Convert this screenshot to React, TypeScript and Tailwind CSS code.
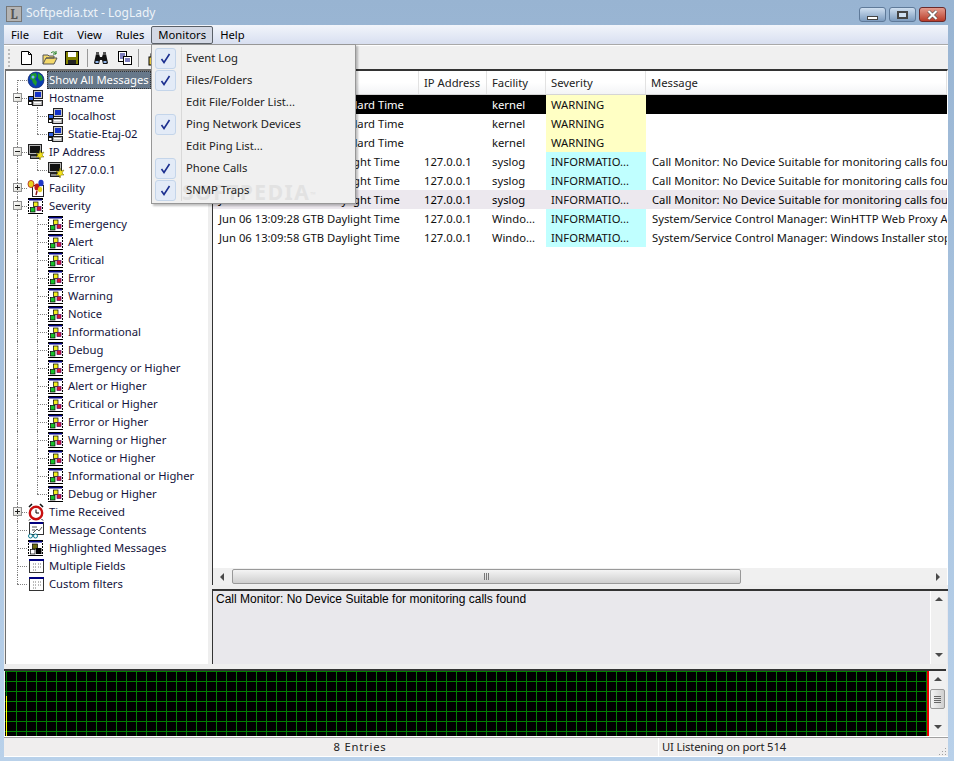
import type { ReactNode } from "react";

type IconKind = "globe" | "host" | "ip" | "facility" | "severity" | "clock" | "contents" | "highlight" | "fields";

type TreeItem = {
  label: string;
  icon: IconKind;
  level: 0 | 1;
  box?: "plus" | "minus";
  selected?: boolean;
  lastChild?: boolean;
  lastRoot?: boolean;
};

const severityNames = [
  "Emergency",
  "Alert",
  "Critical",
  "Error",
  "Warning",
  "Notice",
  "Informational",
  "Debug",
  "Emergency or Higher",
  "Alert or Higher",
  "Critical or Higher",
  "Error or Higher",
  "Warning or Higher",
  "Notice or Higher",
  "Informational or Higher",
  "Debug or Higher",
];

const treeItems: TreeItem[] = [
  { label: "Show All Messages", icon: "globe", level: 0, selected: true },
  { label: "Hostname", icon: "host", level: 0, box: "minus" },
  { label: "localhost", icon: "host", level: 1 },
  { label: "Statie-Etaj-02", icon: "host", level: 1, lastChild: true },
  { label: "IP Address", icon: "ip", level: 0, box: "minus" },
  { label: "127.0.0.1", icon: "ip", level: 1, lastChild: true },
  { label: "Facility", icon: "facility", level: 0, box: "plus" },
  { label: "Severity", icon: "severity", level: 0, box: "minus" },
  ...severityNames.map((label, i) => ({
    label,
    icon: "severity" as IconKind,
    level: 1 as const,
    lastChild: i === severityNames.length - 1,
  })),
  { label: "Time Received", icon: "clock", level: 0, box: "plus" },
  { label: "Message Contents", icon: "contents", level: 0 },
  { label: "Highlighted Messages", icon: "highlight", level: 0 },
  { label: "Multiple Fields", icon: "fields", level: 0 },
  { label: "Custom filters", icon: "fields", level: 0, lastRoot: true },
];

const logRows = [
  { time: "Jun 06 13:08:11 GTB Standard Time", ip: "", facility: "kernel", severity: "WARNING", message: "", selected: true },
  { time: "Jun 06 13:08:11 GTB Standard Time", ip: "", facility: "kernel", severity: "WARNING", message: "" },
  { time: "Jun 06 13:08:11 GTB Standard Time", ip: "", facility: "kernel", severity: "WARNING", message: "" },
  { time: "Jun 06 13:08:40 GTB Daylight Time", ip: "127.0.0.1", facility: "syslog", severity: "INFORMATIO...", message: "Call Monitor: No Device Suitable for monitoring calls found" },
  { time: "Jun 06 13:08:55 GTB Daylight Time", ip: "127.0.0.1", facility: "syslog", severity: "INFORMATIO...", message: "Call Monitor: No Device Suitable for monitoring calls found" },
  { time: "Jun 06 13:09:01 GTB Daylight Time", ip: "127.0.0.1", facility: "syslog", severity: "INFORMATIO...", message: "Call Monitor: No Device Suitable for monitoring calls found", hover: true },
  { time: "Jun 06 13:09:28 GTB Daylight Time", ip: "127.0.0.1", facility: "Windo...", severity: "INFORMATIO...", message: "System/Service Control Manager: WinHTTP Web Proxy Auto-Discovery" },
  { time: "Jun 06 13:09:58 GTB Daylight Time", ip: "127.0.0.1", facility: "Windo...", severity: "INFORMATIO...", message: "System/Service Control Manager: Windows Installer stopped" },
];

const menuItems = [
  { label: "Event Log", checked: true },
  { label: "Files/Folders", checked: true },
  { label: "Edit File/Folder List...", checked: false },
  { label: "Ping Network Devices", checked: true },
  { label: "Edit Ping List...", checked: false },
  { label: "Phone Calls", checked: true },
  { label: "SNMP Traps", checked: true },
];

function TreeIcon({ kind }: { kind: IconKind }) {
  const common = { width: 18, height: 18, viewBox: "0 0 18 18", className: "shrink-0" };
  switch (kind) {
    case "globe":
      return (
        <svg {...common}>
          <circle cx="9" cy="9" r="8" fill="#0a3fb0" stroke="#04145c" strokeWidth="0.6" />
          <path d="M4 3l5-1 1 3-2 3 2 3-1 4-3-3-1-3-2-1zM11 2l4 3 1 4-3 1-2-3z" fill="#1d9b2e" />
          <circle cx="6" cy="6" r="1.5" fill="#7fb4ff" />
        </svg>
      );
    case "host":
      return (
        <svg {...common}>
          <rect x="6.5" y="1.5" width="9" height="8" fill="#c8c8c8" stroke="#222" />
          <rect x="8" y="3" width="6" height="5" fill="#1533c8" />
          <rect x="5.5" y="11.5" width="10" height="5" fill="#a8a8a8" stroke="#222" />
          <path d="M7 13.5h7M7 15h7" stroke="#fff" />
          <rect x="1.5" y="7.5" width="5" height="4" fill="#2f5fe0" stroke="#111" />
          <rect x="1.5" y="12.5" width="3.5" height="3" fill="#fff" stroke="#111" />
        </svg>
      );
    case "ip":
      return (
        <svg {...common}>
          <rect x="1.5" y="1.5" width="13" height="10" fill="#b8b8b8" stroke="#222" />
          <rect x="3" y="3" width="10" height="7" fill="#111" />
          <rect x="3.5" y="12.5" width="9" height="3" fill="#888" stroke="#222" />
          <path d="M13 7l1 3 3-1-2 3 2 2-3 0-1 3-1-3-3 0 2-2-2-2 3 1z" fill="#f4e21d" stroke="#6c6200" strokeWidth="0.5" />
        </svg>
      );
    case "facility":
      return (
        <svg {...common}>
          <rect x="5.5" y="6.5" width="11" height="11" fill="#fff" stroke="#222" />
          <ellipse cx="4" cy="5" rx="3" ry="3.6" fill="#e8d21c" stroke="#b01818" strokeWidth="0.8" />
          <ellipse cx="10" cy="8" rx="2.6" ry="3.6" fill="#c01818" />
          <ellipse cx="14" cy="4" rx="2.6" ry="3.2" fill="#2038c8" />
          <ellipse cx="13" cy="10.5" rx="2.2" ry="2.8" fill="#e8d21c" />
          <path d="M10 12l-1 4" stroke="#8a1010" strokeWidth="1.4" />
        </svg>
      );
    case "severity":
      return (
        <svg {...common}>
          <rect x="1.5" y="1.5" width="14" height="15" fill="#fff" />
          <path d="M1.5 1v16M15.5 1v16" stroke="#000" strokeDasharray="2 1" />
          <path d="M1 1.5h15M1 16.5h15" stroke="#000" />
          <rect x="2" y="2" width="13" height="1.5" fill="#000080" />
          <rect x="6.5" y="5" width="4.5" height="4.5" fill="#f2ee1a" stroke="#000" strokeWidth="0.7" />
          <rect x="3.5" y="10.5" width="4.5" height="4.5" fill="#16c22a" stroke="#000" strokeWidth="0.7" />
          <rect x="10" y="9.5" width="4" height="4" fill="#d81830" stroke="#5a0a6a" strokeWidth="0.7" />
        </svg>
      );
    case "clock":
      return (
        <svg {...common}>
          <circle cx="9" cy="10" r="6.2" fill="#fff" stroke="#c81010" strokeWidth="2.4" />
          <path d="M9 6.5V10h3" fill="none" stroke="#000" />
          <path d="M2 4l3-3M16 4l-3-3" stroke="#111" strokeWidth="1.6" />
          <path d="M3.5 16l-1.5 1.5M14.5 16l1.5 1.5" stroke="#111" />
        </svg>
      );
    case "contents":
      return (
        <svg {...common}>
          <rect x="2.5" y="1.5" width="14" height="12" fill="#fff" stroke="#333" />
          <rect x="3" y="1" width="13" height="2" fill="#000080" />
          <path d="M5 6h5M5 9h3M6 12l4-4 2 2 3-4" fill="none" stroke="#555" />
          <circle cx="3.5" cy="15" r="2" fill="#fff" stroke="#0a7a90" />
          <circle cx="8.5" cy="15" r="2" fill="#fff" stroke="#0a7a90" />
        </svg>
      );
    case "highlight":
      return (
        <svg {...common}>
          <rect x="1.5" y="1.5" width="14" height="15" fill="#fff" />
          <path d="M1.5 1v16M15.5 1v16" stroke="#000" strokeDasharray="2 1" />
          <path d="M1 1.5h15M1 16.5h15" stroke="#000" />
          <rect x="2" y="2" width="13" height="1.5" fill="#000080" />
          <rect x="5.5" y="5" width="5" height="5" fill="#6d6d10" stroke="#000" strokeWidth="0.7" />
          <rect x="3.5" y="10.5" width="4.5" height="4.5" fill="#fff" stroke="#000" strokeWidth="0.7" />
          <rect x="9" y="9" width="5.5" height="6" fill="#000" />
        </svg>
      );
    case "fields":
      return (
        <svg {...common}>
          <rect x="2.5" y="2.5" width="14" height="13" fill="#fff" stroke="#333" />
          <rect x="2" y="2" width="15" height="2" fill="#000080" />
          <path d="M6 7h3M11 7h3M6 10h3M11 10h3M6 13h3" stroke="#777" strokeDasharray="1 1" />
        </svg>
      );
  }
}

function TreeBox({ type }: { type: "plus" | "minus" }) {
  return (
    <span className="absolute left-[5px] top-[4px] flex h-[9px] w-[9px] items-center justify-center border border-[#919191] bg-gradient-to-br from-white to-[#dcdcd4]">
      <span className="absolute h-px w-[5px] bg-[#222]" />
      {type === "plus" && <span className="absolute h-[5px] w-px bg-[#222]" />}
    </span>
  );
}

function TreeRow({ item, first }: { item: TreeItem; first: boolean }) {
  return (
    <div className="flex h-[18px] items-center">
      <div className="relative h-[18px] w-[19px] shrink-0">
        <span
          className={`absolute left-[9px] w-0 border-l border-dotted border-[#808080] ${
            first ? "top-[9px] bottom-0" : item.lastRoot ? "top-0 h-[9px]" : "inset-y-0"
          }`}
        />
        {item.level === 0 && <span className="absolute left-[9px] top-[9px] h-0 w-[10px] border-t border-dotted border-[#808080]" />}
        {item.box && <TreeBox type={item.box} />}
      </div>
      {item.level === 1 && (
        <div className="relative h-[18px] w-[20px] shrink-0">
          <span className={`absolute left-[10px] w-0 border-l border-dotted border-[#808080] ${item.lastChild ? "top-0 h-[9px]" : "inset-y-0"}`} />
          <span className="absolute left-[10px] top-[9px] h-0 w-[10px] border-t border-dotted border-[#808080]" />
        </div>
      )}
      <TreeIcon kind={item.icon} />
      <span
        className={`whitespace-nowrap px-[1px] leading-[16px] ${item.level === 1 ? "ml-[1px]" : "ml-[2px]"} ${
          item.selected ? "border border-dotted border-[#333] bg-[#67788a] text-white" : "border border-transparent text-[#14143c]"
        }`}
      >
        {item.label}
      </span>
    </div>
  );
}

function CaptionButton({ className, children }: { className: string; children: ReactNode }) {
  return <div className={`flex h-[15px] w-[27px] items-center justify-center rounded-[3px] border ${className}`}>{children}</div>;
}

function ScrollArrow({ dir }: { dir: "up" | "down" | "left" | "right" }) {
  const shapes = { up: "M1 6l4-4 4 4z", down: "M1 3l4 4 4-4z", left: "M7 1L3 5l4 4z", right: "M3 1l4 4-4 4z" };
  return (
    <svg width="10" height="10" viewBox="0 0 10 10">
      <path d={shapes[dir]} fill="#4a4a4a" />
    </svg>
  );
}

function ToolIcon({ kind, className }: { kind: "new" | "open" | "save" | "find" | "copy" | "lock"; className: string }) {
  const common = { width: 16, height: 16, viewBox: "0 0 16 16", className: `shrink-0 ${className}` };
  if (kind === "new")
    return (
      <svg {...common}>
        <path d="M2.5 1.5h7l3 3v10h-10z" fill="#fff" stroke="#000" />
        <path d="M9.5 1.5v3h3" fill="none" stroke="#000" />
      </svg>
    );
  if (kind === "open")
    return (
      <svg {...common}>
        <path d="M1 14V5h5l1 1h5v2H4l-3 6h11l3-6H4" fill="#f4d96a" stroke="#555" />
        <path d="M9 3c2-2 4-1 5 1M14 1v3h-3" fill="none" stroke="#1a7a1a" />
      </svg>
    );
  if (kind === "save")
    return (
      <svg {...common}>
        <rect x="1.5" y="1.5" width="13" height="13" fill="#808000" stroke="#000" />
        <rect x="4" y="2" width="8" height="5" fill="#fff" />
        <rect x="4" y="10" width="8" height="4" fill="#222" />
      </svg>
    );
  if (kind === "find")
    return (
      <svg {...common}>
        <path d="M1 13l2-9h3l1 3h2l1-3h3l2 9-1 1h-4l-1-4H7l-1 4H2z" fill="#111" />
        <rect x="3" y="2" width="3" height="3" fill="#555" />
        <rect x="10" y="2" width="3" height="3" fill="#555" />
        <rect x="2.5" y="11" width="3" height="2" fill="#8fb4e8" />
        <rect x="10.5" y="11" width="3" height="2" fill="#8fb4e8" />
      </svg>
    );
  if (kind === "copy")
    return (
      <svg {...common}>
        <rect x="1.5" y="1.5" width="8" height="10" fill="#fff" stroke="#000" />
        <path d="M3 4h5M3 6h5M3 8h5" stroke="#000080" />
        <rect x="6.5" y="6.5" width="8" height="8" fill="#fff" stroke="#000" />
        <path d="M8 9h5M8 11h5" stroke="#000080" />
      </svg>
    );
  return (
    <svg {...common}>
      <rect x="3" y="7" width="10" height="8" fill="#e8c840" stroke="#000" />
      <path d="M5 7V4a3 3 0 016 0v3" fill="none" stroke="#000" />
    </svg>
  );
}

function ActivityGrid() {
  const columns = Array.from({ length: 93 }, (_, i) => i * 10 + 1.5);
  const lines = Array.from({ length: 7 }, (_, i) => i * 10 + 0.5);
  return (
    <svg width="922" height="65" className="block">
      <rect width="922" height="65" fill="#000" />
      {columns.map((x) => (
        <line key={x} x1={x} x2={x} y1="0" y2="65" stroke="#008000" />
      ))}
      {lines.map((y) => (
        <line key={y} x1="0" x2="922" y1={y} y2={y} stroke="#008000" />
      ))}
      <rect x="1" y="25" width="1" height="40" fill="#ffff00" />
    </svg>
  );
}

export default function App() {
  return (
    <div
      className="relative flex h-[761px] w-[954px] flex-col overflow-hidden bg-gradient-to-b from-[#98b4d2] via-[#a9c4e0] to-[#b9d1ea] text-[11.25px] text-black"
      style={{ fontFamily: '"Noto Sans", "Liberation Sans", sans-serif' }}
    >
      {/* glass title bar */}
      <div className="flex h-[25px] shrink-0 items-start pl-[6px] pr-[8px]">
        <div className="mt-[6px] flex h-[16px] w-[16px] items-center justify-center border border-[#777] bg-[#b4b4b4] font-serif text-[13px] font-bold leading-none text-[#555]">
          L
        </div>
        <span className="ml-[4px] mt-[5px] text-[12px] leading-[16px] text-[#eef3f8]">Softpedia.txt - LogLady</span>
        <div className="ml-auto mt-[7px] flex gap-[3px]">
          <CaptionButton className="border-[#5f7a99] bg-gradient-to-b from-[#cfdff0] to-[#7d9cbf]">
            <span className="mt-[6px] h-[4px] w-[11px] border border-[#444] bg-white" />
          </CaptionButton>
          <CaptionButton className="border-[#5f7a99] bg-gradient-to-b from-[#cfdff0] to-[#7d9cbf]">
            <span className="h-[8px] w-[11px] border-2 border-[#444] bg-[#cfdff0]" />
          </CaptionButton>
          <CaptionButton className="border-[#6b2a2a] bg-gradient-to-b from-[#e39a8c] to-[#b83a28]">
            <svg width="13" height="10" viewBox="0 0 13 10">
              <path d="M2.5 1l8 8M10.5 1l-8 8" stroke="#444" strokeWidth="3.2" />
              <path d="M2.5 1l8 8M10.5 1l-8 8" stroke="#fff" strokeWidth="2.2" />
            </svg>
          </CaptionButton>
        </div>
      </div>

      {/* client area */}
      <div className="ml-[4px] mr-[6px] flex min-h-0 flex-1 flex-col bg-[#eeeeee]">
        <div className="flex h-[19px] shrink-0 items-center bg-gradient-to-b from-[#f2f5fb] to-[#d8dff0] pt-[1px]">
          {["File", "Edit", "View", "Rules", "Monitors", "Help"].map((m) => (
            <span
              key={m}
              className={`flex h-[18px] items-center rounded-[2px] border px-[6px] ${
                m === "Monitors" ? "border-[#5a6068] bg-[#d3d8e4]" : "border-transparent"
              }`}
            >
              {m}
            </span>
          ))}
        </div>
        <div className="h-[2px] shrink-0 border-t border-[#a9a9a9] bg-white" />

        <div className="flex h-[23px] shrink-0 items-center bg-[#f0f0f0] pl-[4px]">
          <span className="h-[18px] w-[5px] border-l-2 border-dotted border-[#bbb]" />
          <ToolIcon kind="new" className="ml-[6px]" />
          <ToolIcon kind="open" className="ml-[7px]" />
          <ToolIcon kind="save" className="ml-[6px]" />
          <span className="ml-[7px] h-[18px] w-px bg-[#999]" />
          <ToolIcon kind="find" className="ml-[5px]" />
          <ToolIcon kind="copy" className="ml-[8px]" />
          <span className="ml-[5px] h-[18px] w-px bg-[#999]" />
          <ToolIcon kind="lock" className="ml-[7px]" />
        </div>

        <div className="flex min-h-0 flex-1">
          {/* tree */}
          <div className="ml-[1px] h-[595px] w-[203px] shrink-0 overflow-hidden border-t-2 border-l border-[#6f6f6f] bg-white pl-[2px]">
            {treeItems.map((item, i) => (
              <TreeRow key={`${item.label}-${i}`} item={item} first={i === 0} />
            ))}
          </div>

          <div className="ml-[4px] flex h-[595px] min-w-0 flex-1 flex-col">
            {/* log table */}
            <div className="flex h-[516px] shrink-0 flex-col overflow-hidden border-t-2 border-l border-r border-[#333] border-r-white bg-white">
              <div className="flex h-[24px] shrink-0 border-b border-[#d5d5d5] bg-gradient-to-b from-white from-50% to-[#f3f4f6]">
                {[
                  ["Time", "w-[206px]"],
                  ["IP Address", "w-[68px]"],
                  ["Facility", "w-[59px]"],
                  ["Severity", "w-[100px]"],
                  ["Message", "flex-1"],
                ].map(([h, w]) => (
                  <div key={h} className={`flex items-center border-r border-[#e2e2e2] pl-[5px] pt-[2px] text-[#222] ${w}`}>
                    {h}
                  </div>
                ))}
              </div>
              <div className="min-h-0 flex-1 overflow-hidden">
                {logRows.map((r, i) => (
                  <div
                    key={i}
                    className={`flex h-[19px] whitespace-nowrap leading-[16px] ${
                      r.selected ? "bg-black text-white" : r.hover ? "bg-[#ece8ee]" : "text-[#111]"
                    }`}
                  >
                    <div className="w-[206px] shrink-0 pl-[6px] pt-[2px]">{r.time}</div>
                    <div className="w-[68px] shrink-0 pl-[5px] pt-[2px]">{r.ip}</div>
                    <div className="w-[59px] shrink-0 pl-[5px] pt-[2px]">{r.facility}</div>
                    <div
                      className={`w-[100px] shrink-0 pl-[5px] pt-[2px] text-[#111] ${
                        r.hover ? "" : r.severity === "WARNING" ? "bg-[#ffffc4]" : "bg-[#c0ffff]"
                      }`}
                    >
                      {r.severity}
                    </div>
                    <div className="min-w-0 flex-1 overflow-hidden pl-[6px] pt-[2px]">{r.message}</div>
                  </div>
                ))}
              </div>
              <div className="flex h-[17px] shrink-0 items-center bg-[#f0f0f0] px-[4px]">
                <ScrollArrow dir="left" />
                <div className="ml-[5px] flex h-[15px] w-[509px] items-center justify-center gap-px rounded-[2px] border border-[#999] bg-gradient-to-b from-[#f4f4f4] to-[#cfcfcf]">
                  <span className="h-[7px] w-px bg-[#777]" />
                  <span className="h-[7px] w-px bg-[#777]" />
                  <span className="h-[7px] w-px bg-[#777]" />
                </div>
                <div className="ml-auto">
                  <ScrollArrow dir="right" />
                </div>
              </div>
            </div>
            {/* message detail */}
            <div className="mt-[4px] flex min-h-0 flex-1 border-t-2 border-l border-[#333] bg-[#e9e8ec]">
              <p className="flex-1 pl-[3px] pt-[1px] text-[12px] leading-[15px]" style={{ fontFamily: '"Liberation Sans", sans-serif' }}>
                Call Monitor: No Device Suitable for monitoring calls found
              </p>
              <div className="mr-px flex w-[17px] flex-col items-center justify-between border-l border-white bg-[#f0f0f0] py-[4px]">
                <ScrollArrow dir="up" />
                <ScrollArrow dir="down" />
              </div>
            </div>
          </div>
        </div>

        {/* activity graph */}
        <div className="mr-[2px] mt-[5px] flex h-[67px] shrink-0 border-t-2 border-[#333] bg-[#f0f0f0]">
          <div className="ml-[1px] w-[924px] shrink-0 border-r-2 border-r-[#f00000] bg-black">
            <ActivityGrid />
          </div>
          <div className="flex flex-1 flex-col items-center pt-[4px]">
            <ScrollArrow dir="up" />
            <div className="mt-[4px] flex h-[20px] w-[15px] flex-col items-center justify-center gap-px rounded-[2px] border border-[#999] bg-gradient-to-r from-[#f4f4f4] to-[#cfcfcf]">
              <span className="h-px w-[7px] bg-[#666]" />
              <span className="h-px w-[7px] bg-[#666]" />
              <span className="h-px w-[7px] bg-[#666]" />
              <span className="h-px w-[7px] bg-[#666]" />
            </div>
            <div className="mt-auto pb-[4px]">
              <ScrollArrow dir="down" />
            </div>
          </div>
        </div>
        <div className="h-px shrink-0 bg-white" />

        {/* status bar */}
        <div className="flex h-[19px] shrink-0 items-center border-t border-[#a0a0a0] bg-[#f0eeee] text-[#222]">
          <div className="w-[654px] pl-[58px] text-center tracking-[0.8px]">8 Entries</div>
          <div className="h-full w-px bg-white" />
          <div className="pl-[3px] tracking-[-0.15px]">UI Listening on port 514</div>
          <svg width="9" height="9" viewBox="0 0 9 9" className="ml-auto mr-px self-end">
            <path d="M7 1h1v1H7zM4 4h1v1H4zM7 4h1v1H7zM1 7h1v1H1zM4 7h1v1H4zM7 7h1v1H7z" fill="#a0a0a0" />
          </svg>
        </div>
        <div className="h-px shrink-0 bg-white" />
      </div>
      <div className="h-[4px] shrink-0" />

      {/* Monitors dropdown */}
      <div className="absolute left-[151px] top-[44px] z-10 flex h-[160px] w-[205px] flex-col border border-[#979797] bg-[#f0f0f0] py-[2px] pl-[2px] shadow-[2px_2px_2px_rgba(0,0,0,0.25)]">
        <span className="absolute bottom-[2px] left-[29px] top-[2px] w-px bg-[#d9d9d9]" />
        <span className="absolute left-[30px] top-[135px] whitespace-nowrap text-[21px] font-bold leading-[24px] tracking-[1.5px] text-[#e2e2e2]">
          SOFTPEDIA<sup className="text-[7px] font-normal tracking-normal">™</sup>
        </span>
        {menuItems.map((m) => (
          <div key={m.label} className="relative flex h-[22px] items-center">
            <span
              className={`ml-px flex h-[21px] w-[21px] shrink-0 items-center justify-center rounded-[3px] ${
                m.checked ? "border border-[#c4d5ea] bg-[#e3ebf7]" : ""
              }`}
            >
              {m.checked && (
                <svg width="11" height="11" viewBox="0 0 11 11">
                  <path d="M1.5 6l2.5 3.5L9.5 1" fill="none" stroke="#1c2f8f" strokeWidth="1.6" />
                </svg>
              )}
            </span>
            <span className="ml-[10px] whitespace-nowrap text-[#222]">{m.label}</span>
          </div>
        ))}
      </div>
    </div>
  );
}
